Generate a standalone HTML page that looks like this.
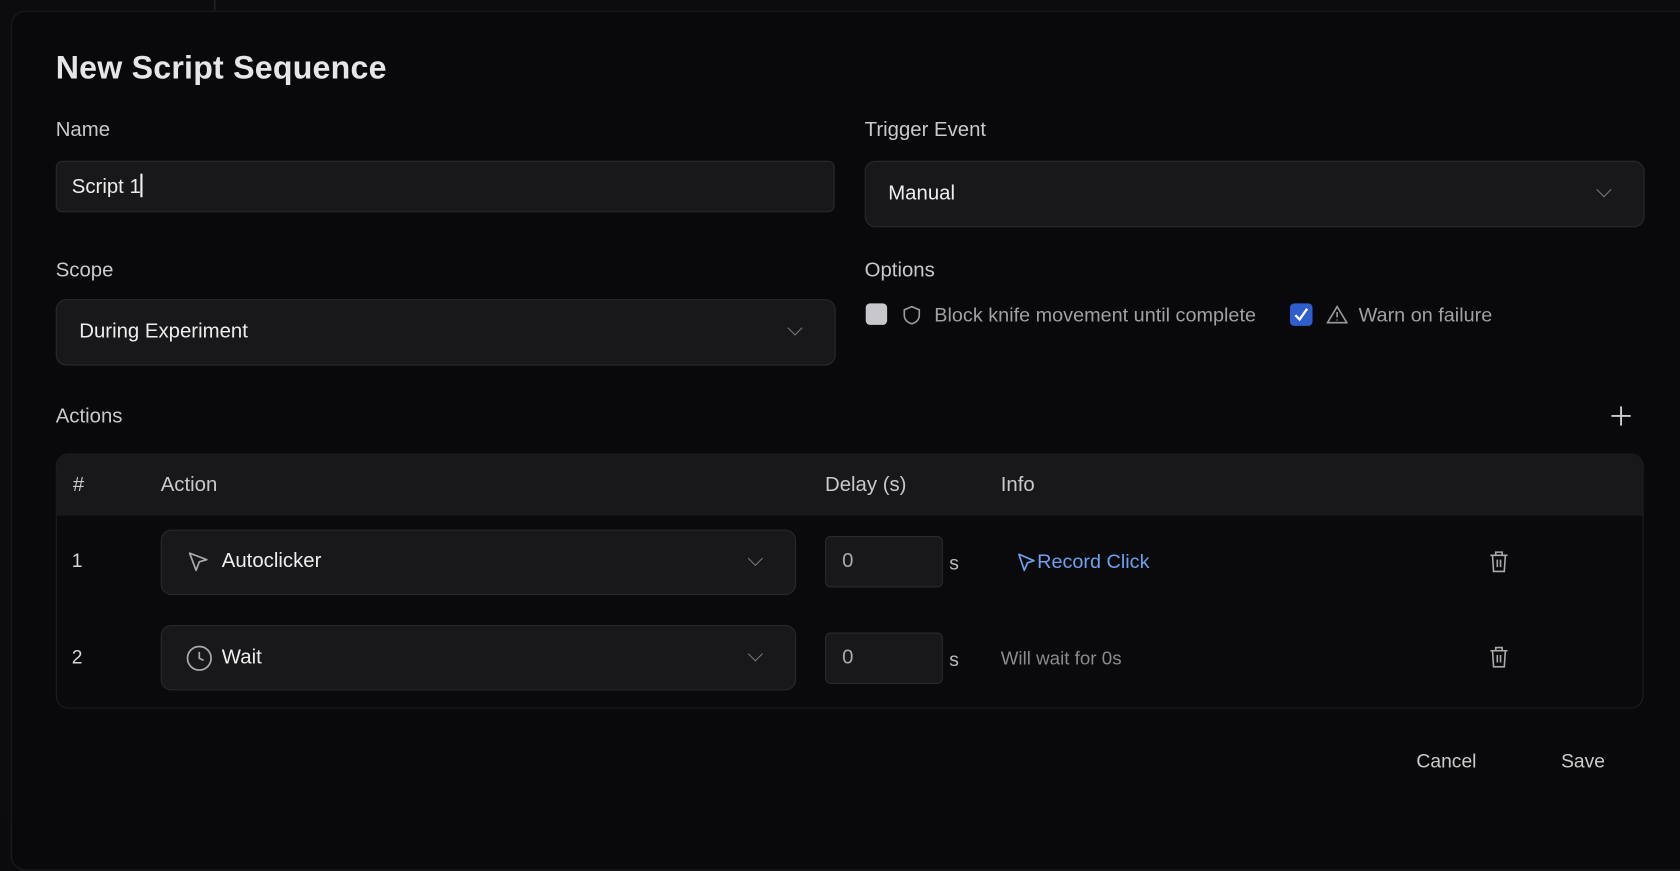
<!DOCTYPE html>
<html><head><style>
html,body{margin:0;padding:0;background:#0b0b0d;width:1680px;height:818px;overflow:hidden;font-family:"Liberation Sans",sans-serif;}
#w{position:absolute;left:0;top:0;width:1568px;height:763px;transform:scale(1.07143,1.07208);transform-origin:0 0;}
.bg{position:absolute;inset:0;background:#0c0c0e;}
.modal{position:absolute;left:10px;top:10px;width:1600px;height:800px;background:#09090b;border:1px solid #1e1e22;border-radius:14px;}
.a{position:absolute;color:#d8d8dc;}
.lbl{font-size:19px;color:#c9c9cd;}
.box{position:absolute;background:#18181b;border:1px solid #2a2a2e;border-radius:10px;}
.chev{position:absolute;width:9px;height:9px;border-right:1.5px solid #77777c;border-bottom:1.5px solid #77777c;transform:rotate(45deg);}
svg{position:absolute;}
</style></head><body><div id="w">
<div class="bg"></div>
<div style="position:absolute;left:200px;top:0;width:1px;height:10px;background:#2a2a35"></div>
<div class="modal"></div>
<div class="a" style="left:52px;top:47px;font-size:30px;font-weight:bold;color:#e6e6e9;letter-spacing:0.2px">New Script Sequence</div>
<div class="a lbl" style="left:52px;top:111px">Name</div>
<div class="a lbl" style="left:807px;top:111px">Trigger Event</div>
<div class="box" style="left:52px;top:150px;width:725px;height:46px;border-radius:6px"></div>
<div class="a" style="left:67px;top:162px;font-size:19px;color:#eee">Script 1<span style="display:inline-block;width:1.5px;height:22px;background:#eee;vertical-align:-4px"></span></div>
<div class="box" style="left:807px;top:150px;width:726px;height:60px"></div>
<div class="a" style="left:829px;top:170px;font-size:19px;color:#eee">Manual</div>
<div class="chev" style="left:1492px;top:172px"></div>
<div class="a lbl" style="left:52px;top:242px">Scope</div>
<div class="a lbl" style="left:807px;top:242px">Options</div>
<div class="box" style="left:52px;top:279px;width:726px;height:60px"></div>
<div class="a" style="left:74px;top:299px;font-size:19px;color:#eee">During Experiment</div>
<div class="chev" style="left:737px;top:301px"></div>
<div style="position:absolute;left:808px;top:283px;width:20px;height:20px;background:#c8c8cc;border-radius:4px"></div>
<svg style="left:842px;top:284px" width="18" height="20" viewBox="0 0 18 20"><path d="M9 2 L16 5 V10 C16 14 13 17 9 18 C5 17 2 14 2 10 V5 Z" fill="none" stroke="#9a9aa0" stroke-width="1.5"/></svg>
<div class="a" style="left:872px;top:283px;font-size:18.5px;color:#a0a0a6">Block knife movement until complete</div>
<div style="position:absolute;left:1204px;top:283px;width:21px;height:21px;background:#2f5fcf;border-radius:4px"></div>
<svg style="left:1204px;top:283px" width="21" height="21"><path d="M5 11 L9 15 L16 5" fill="none" stroke="#fff" stroke-width="2.2"/></svg>
<svg style="left:1238px;top:284px" width="20" height="19"><path d="M10 2 L19 17 H1 Z M10 7 V12 M10 14 V15" fill="none" stroke="#9a9aa0" stroke-width="1.5"/></svg>
<div class="a" style="left:1268px;top:283px;font-size:18.5px;color:#a0a0a6">Warn on failure</div>
<div class="a lbl" style="left:52px;top:378px">Actions</div>
<svg style="left:1503px;top:378px" width="20" height="20"><path d="M10 1V19M1 10H19" stroke="#ccc" stroke-width="1.8"/></svg>
<div style="position:absolute;left:52px;top:423px;width:1480px;height:236px;border:1px solid #1f1f23;border-radius:12px;overflow:hidden;background:#0a0a0c">
<div style="position:absolute;left:0;top:0;right:0;height:57px;background:#18181a"></div>
</div>
<div class="a lbl" style="left:68px;top:442px">#</div>
<div class="a lbl" style="left:150px;top:442px">Action</div>
<div class="a lbl" style="left:770px;top:442px">Delay (s)</div>
<div class="a lbl" style="left:934px;top:442px">Info</div>
<div class="a" style="left:67px;top:513px;font-size:18px">1</div>
<div class="a" style="left:67px;top:603px;font-size:18px">2</div>
<div class="box" style="left:150px;top:494px;width:591px;height:59px"></div>
<div class="box" style="left:150px;top:583px;width:591px;height:59px"></div>
<svg style="left:174px;top:513px" width="22" height="22"><path d="M3 3 L19 9 L12 11 L9 19 Z" fill="none" stroke="#aaa" stroke-width="1.6" stroke-linejoin="round"/></svg>
<div class="a" style="left:207px;top:513px;font-size:19px;color:#eee">Autoclicker</div>
<svg style="left:173px;top:601px" width="26" height="26"><circle cx="13" cy="13" r="11" fill="none" stroke="#aaa" stroke-width="1.6"/><path d="M13 7V13L17 15" fill="none" stroke="#aaa" stroke-width="1.6"/></svg>
<div class="a" style="left:207px;top:603px;font-size:19px;color:#eee">Wait</div>
<div class="chev" style="left:700px;top:516px"></div>
<div class="chev" style="left:700px;top:605px"></div>
<div class="box" style="left:770px;top:500px;width:108px;height:46px;border-radius:5px"></div>
<div class="box" style="left:770px;top:590px;width:108px;height:46px;border-radius:5px"></div>
<div class="a" style="left:786px;top:513px;font-size:19px;color:#aaa">0</div>
<div class="a" style="left:786px;top:603px;font-size:19px;color:#aaa">0</div>
<div class="a" style="left:886px;top:515px;font-size:18px;color:#bbb">s</div>
<div class="a" style="left:886px;top:605px;font-size:18px;color:#bbb">s</div>
<svg style="left:949px;top:515px" width="20" height="20"><path d="M2 2 L16 8 L10 10 L7 17 Z" fill="none" stroke="#6ea0ee" stroke-width="1.6" stroke-linejoin="round"/></svg>
<div class="a" style="left:968px;top:513px;font-size:18.5px;color:#6ea0ee">Record Click</div>
<div class="a" style="left:934px;top:604px;font-size:17.5px;color:#8a8a90">Will wait for 0s</div>
<svg style="left:1390px;top:514px" width="18" height="20"><path d="M1 4H17M6 4V1H12V4M3 4L4 19H14L15 4M7.5 8V15M10.5 8V15" fill="none" stroke="#aaa" stroke-width="1.5"/></svg>
<svg style="left:1390px;top:603px" width="18" height="20"><path d="M1 4H17M6 4V1H12V4M3 4L4 19H14L15 4M7.5 8V15M10.5 8V15" fill="none" stroke="#aaa" stroke-width="1.5"/></svg>
<div class="a" style="left:1322px;top:700px;font-size:18px;color:#ccc">Cancel</div>
<div class="a" style="left:1457px;top:700px;font-size:18px;color:#ccc">Save</div>
</div></body></html>
